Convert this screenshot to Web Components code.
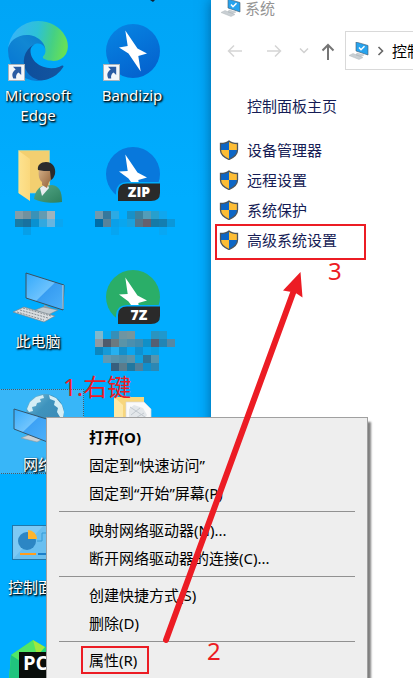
<!DOCTYPE html>
<html lang="zh-CN">
<head>
<meta charset="utf-8">
<title>系统</title>
<style>
  html, body { margin: 0; height: 100%; overflow: hidden; }
  body { font: 15px/20px "Noto Sans", "Noto Sans CJK SC", sans-serif; color: #000; }
</style>
</head>
<body>
<desk-top>
  <desktop-icon icon="edge">Microsoft Edge</desktop-icon>
  <desktop-icon icon="bandizip">Bandizip</desktop-icon>
  <desktop-icon icon="user"></desktop-icon>
  <desktop-icon icon="zip"></desktop-icon>
  <desktop-icon icon="pc">此电脑</desktop-icon>
  <desktop-icon icon="seven"></desktop-icon>
  <desktop-icon icon="network" selected>网络</desktop-icon>
  <desktop-icon icon="folder"></desktop-icon>
  <desktop-icon icon="panel">控制面板</desktop-icon>
  <desktop-icon icon="none"></desktop-icon>
  <desktop-icon icon="pycharm"></desktop-icon>
  <system-window slot="window" heading="系统">
    <side-link slot="home">控制面板主页</side-link>
    <side-link shield>设备管理器</side-link>
    <side-link shield>远程设置</side-link>
    <side-link shield>系统保护</side-link>
    <side-link shield marked>高级系统设置</side-link>
  </system-window>
  <context-menu slot="overlay">
    <menu-item strong>打开(O)</menu-item>
    <menu-item>固定到“快速访问”</menu-item>
    <menu-item>固定到“开始”屏幕(P)</menu-item>
    <menu-rule></menu-rule>
    <menu-item>映射网络驱动器(N)...</menu-item>
    <menu-item>断开网络驱动器的连接(C)...</menu-item>
    <menu-rule></menu-rule>
    <menu-item>创建快捷方式(S)</menu-item>
    <menu-item>删除(D)</menu-item>
    <menu-rule></menu-rule>
    <menu-item marked>属性(R)</menu-item>
  </context-menu>
  <step-notes slot="overlay"></step-notes>
</desk-top>

<script>
const define = (name, html, setup) => {
  const t = document.createElement('template');
  t.innerHTML = html;
  customElements.define(name, class extends HTMLElement {
    constructor() {
      super();
      this.attachShadow({ mode: 'open' }).append(t.content.cloneNode(true));
    }
    connectedCallback() { if (setup) setup(this, this.shadowRoot); }
  });
};

/* 8px blocks that hide a label: x, y, colour triples */
const blocks = list => `<g shape-rendering="crispEdges">${list.map(([x, y, c]) => `<rect x="${x}" y="${y}" width="8" height="8" fill="${c}"/>`).join('')}</g>`;

const shortcut = (x, y) => `<g transform="translate(${x} ${y})">
  <rect x=".5" y=".5" width="16" height="16" fill="#f5f7fa" stroke="#a9b4bd"/>
  <path d="M5 2.8h8.2V11l-2.6-2.6C8.5 9.8 7.7 11.4 8.2 14.4H5.300C3.300 10.500 4.600 7.700 7.700 5.600z" fill="#2b5ca3"/></g>`;

const bolt = 'M31.300 9.500L43.500 27.500 53 32.500 44.300 35 46.700 50.500 34.500 32.500 25 26.500 33.700 25z';

const tag = (text, color) => `<circle cx="39" cy="30" r="27" fill="${color}"/>
  <path d="M31.300 10.500L43.500 28.500 53 33.500 44.300 36 47 52 34.500 34.500 25 27.500 33.700 27z" fill="#fff"/>
  <path d="M22 58V48q1-10 11-10h33v20z" fill="#00adff"/>
  <path d="M24 57V48q0-8.500 9-8.500h33V49q0 8-9 8z" fill="#2a2a2a"/>
  <text x="45" y="53" text-anchor="middle" font-family="Open Sans, Noto Sans, sans-serif" font-weight="800" font-size="14" fill="#fff">${text}</text>`;

const art = {
  none: '',
  edge: `<defs>
    <linearGradient id="a" x1="80" y1="178" x2="241" y2="178" gradientUnits="userSpaceOnUse"><stop stop-color="#0e4f9c"/><stop offset="1" stop-color="#14559f"/></linearGradient>
    <linearGradient id="b" x1="157" y1="104" x2="46" y2="225" gradientUnits="userSpaceOnUse"><stop stop-color="#0d80cf"/><stop offset=".3" stop-color="#1187d3"/><stop offset="1" stop-color="#0878d3"/></linearGradient>
    <linearGradient id="c" x1="10" y1="80" x2="240" y2="130" gradientUnits="userSpaceOnUse"><stop stop-color="#38b4f6"/><stop offset=".45" stop-color="#2dc2d6"/><stop offset=".75" stop-color="#45d084"/><stop offset="1" stop-color="#66e058"/></linearGradient></defs>
    <g transform="translate(8 0) scale(.234)">
    <g transform="translate(-4.630 -4.920)">
    <path d="M235.680 195.460a93.730 93.730 0 0 1-10.540 4.710 101.870 101.870 0 0 1-35.900 6.460c-47.320 0-88.540-32.550-88.540-74.320A31.480 31.480 0 0 1 117.130 105C74.330 106.800 63.330 151.400 63.330 177.530c0 73.880 68.090 81.370 82.760 81.370 7.910 0 19.840-2.300 27-4.560l1.310-.44a128.340 128.340 0 0 0 66.600-52.800 4 4 0 0 0-5.320-5.640z" fill="url(#a)"/>
    <path d="M110.340 246.340A79.200 79.200 0 0 1 87.600 225a80.720 80.720 0 0 1 29.530-120c3.120-1.470 8.450-4.130 15.540-4a32.350 32.350 0 0 1 25.690 13 31.880 31.880 0 0 1 6.360 18.660c0-.21 24.460-79.600-80-79.600-43.900 0-80 41.660-80 78.210a130.150 130.150 0 0 0 12.110 56 128 128 0 0 0 156.380 67.110 75.550 75.550 0 0 1-62.780-8z" fill="url(#b)"/></g>
    <path d="M152.330 148.860c-.81 1.050-3.300 2.500-3.300 5.660 0 2.610 1.700 5.120 4.720 7.230 14.380 10 41.490 8.680 41.560 8.680a59.560 59.560 0 0 0 30.270-8.350A61.380 61.380 0 0 0 256 109.200c.26-22.410-8-37.310-11.340-43.910C223.460 23.840 177.720 0 128 0A128 128 0 0 0 0 126.200c.48-36.540 36.800-66.050 80-66.050 3.500 0 23.460.34 42 10.070 16.340 8.580 24.900 18.940 30.850 29.210 6.180 10.670 7.280 24.150 7.280 29.520s-2.740 13.330-7.800 19.910z" fill="url(#c)"/></g>
    ${shortcut(8, 43)}`,
  bandizip: `<defs><linearGradient id="g" x2=".5" y2="1"><stop stop-color="#0786e4"/><stop offset="1" stop-color="#0464cf"/></linearGradient></defs>
    <path d="M56-21h5l-2 2z" fill="#123"/>
    <circle cx="39" cy="30" r="27" fill="url(#g)"/>
    <path d="${bolt}" fill="#fff"/>
    ${shortcut(9, 43)}`,
  user: `<defs><linearGradient id="f" x2="1"><stop stop-color="#fde28f"/><stop offset="1" stop-color="#fbd87c"/></linearGradient>
    <linearGradient id="k" x2="1" y2="1"><stop stop-color="#d9b78f"/><stop offset="1" stop-color="#8f5d34"/></linearGradient>
    <linearGradient id="j" x2="1" y2="1"><stop stop-color="#56a98a"/><stop offset="1" stop-color="#2d7f5d"/></linearGradient></defs>
    <path d="M18.500 6.500h31V49h-31z" fill="#f3cf70" stroke="#a6d7b4" stroke-width=".7"/>
    <path d="M19 7l11 8v42L19 49.500z" fill="url(#f)"/>
    <path d="M34 55c1-8 5-12 9-13l9-1c7 1 10 6 10 17-10 2-22 0-28-3z" fill="url(#j)"/>
    <path d="M40 44l2 8 7-8-2-5z" fill="#e8edf0"/>
    <path d="M39 24c0-4 12-5 13 1s0 11-3 13l-2 6-5-3v-3c-3-2-4-7-3-14z" fill="url(#k)"/>
    <path d="M38 26c-1-5 3-8 8-8 7 0 10 6 9 12-1 3-2 5-4 6l-1-9c-4 0-8 0-12-1z" fill="#2b2b2d"/>
    ${blocks([[15,67,'#839da8'],[23,67,'#71919e'],[31,67,'#3992b8'],[39,67,'#639bb2'],[47,67,'#a0b3bc'],[15,75,'#197ba5'],[23,75,'#1871a0'],[31,75,'#0991d1'],[39,75,'#32a8df'],[47,75,'#67b5df'],[55,75,'#0aa6f1'],[23,83,'#079fe8']])}`,
  zip: `${tag('ZIP', '#0878dc')}
    ${blocks([[1,67,'#7299ad'],[9,67,'#35789d'],[17,67,'#2caae4'],[33,67,'#1691c9'],[41,67,'#3b829f'],[49,67,'#529db9'],[57,67,'#279fcd'],[65,67,'#10a6ee'],[1,75,'#006da8'],[9,75,'#57839b'],[17,75,'#0aa0e9'],[25,75,'#09a6ef'],[33,75,'#18a2e0'],[41,75,'#51758b'],[49,75,'#65606f'],[57,75,'#167aa7'],[65,75,'#147eb0'],[73,75,'#0b97d9'],[17,83,'#06a5f1'],[65,83,'#08a7f3']])}`,
  pc: `<defs><linearGradient id="m" x2="1" y2="1"><stop stop-color="#32a9fb"/><stop offset=".5" stop-color="#6cc2fd"/><stop offset=".52" stop-color="#379df2"/><stop offset="1" stop-color="#4eb2fa"/></linearGradient></defs>
    <path d="M44 38l7 3v4h-8z" fill="#929da5"/><path d="M35 43l8-3 15 3-10 5z" fill="#c3cbd0" stroke="#78858e" stroke-width=".6"/>
    <path d="M26 6l38 12-1 25-37-12z" fill="url(#m)" stroke="#3a515f"/><path d="M63 18v24" stroke="#c7d1d7"/>
    <path d="M13 45l11-5 31 9-11 6z" fill="#d9dde0" stroke="#79858d" stroke-width=".7"/>
    <path d="M17 45l27 8M20 43l28 8M23 41l28 8" stroke="#858e94" stroke-dasharray="2 1"/>`,
  seven: `${tag('7Z', '#2aae68')}
    ${blocks([[1,64,'#7fb8cc'],[9,64,'#08a9f0'],[17,64,'#358fb8'],[25,64,'#6e95a2'],[33,64,'#76969c'],[57,64,'#2a94c0'],[65,64,'#2098cc'],[1,72,'#8f9aa3'],[9,72,'#4f5b6c'],[17,72,'#6b7a80'],[25,72,'#5a94a8'],[33,72,'#4b8fae'],[41,72,'#3f8cb0'],[49,72,'#1090c8'],[57,72,'#556074'],[65,72,'#2385b4'],[73,72,'#5688a4'],[1,80,'#0d86bf'],[9,80,'#159ad8'],[17,80,'#25b0f0'],[25,80,'#1390cc'],[33,80,'#0aa6f0'],[41,80,'#1090d0'],[49,80,'#08a4ec'],[57,80,'#0a9fe0'],[9,88,'#5f9ab5'],[17,88,'#5793ac'],[25,88,'#4f90ac'],[33,88,'#5f94a8'],[41,88,'#10a0de'],[49,88,'#2e7498'],[57,88,'#5595ae'],[17,96,'#375f7d'],[25,96,'#5a7c8c'],[33,96,'#2078a0'],[41,96,'#51809a'],[49,96,'#0f8fcc'],[57,96,'#2c88b4']])}`,
  network: `<defs><linearGradient id="n" x2="1" y2="1"><stop stop-color="#7cc3dc"/><stop offset=".4" stop-color="#3e93bd"/><stop offset="1" stop-color="#3a86b2"/></linearGradient>
    <linearGradient id="m" x2="1" y2="1"><stop stop-color="#36acfc"/><stop offset=".45" stop-color="#70c4fd"/><stop offset=".47" stop-color="#3da2f5"/><stop offset="1" stop-color="#4eb2fa"/></linearGradient></defs>
    <circle cx="45" cy="23" r="19" fill="url(#n)"/>
    <path d="M27 19l3-7 6-5 7-2 1 3-4 1 1 3-4 1-1 3-4 1 1 4-4 1zM49 5l7 3 6 7 2 7-1 6-3-1-3-5 1-4-4-3 1-4-5-2zM30 25l5 1 2 4-4 1z" fill="#d5eef5"/>
    <path d="M29 41h8v6h-8z" fill="#98a4ac"/><path d="M21 48l10-4 16 3-10 5z" fill="#c9d1d6" stroke="#8b98a0" stroke-width=".6"/>
    <path d="M14 19l36 11v23L14 39z" fill="url(#m)" stroke="#34566d"/>`,
  folder: `<path d="M20 7h30v57H20z" fill="#f7d67c"/><path d="M20 7l9 8v49h-9z" fill="#fde8a5"/>
    <path d="M32 12h18l7 7v45H32z" fill="#fafafa" stroke="#d9d9d9" stroke-width=".7"/>
    <path d="M35 19l5-4 9 3 4 7-3 5-9 1-6-4z" fill="#e3e7ea"/><path d="M36 17l15 10M37 25l9-7M40 29l10-6" stroke="#c2c9cf"/>`,
  panel: `<rect x="12.500" y="12.500" width="48" height="34" fill="#69bff0" stroke="#1f77ab"/>
    <path d="M13 46V13h30z" fill="#8bd0f6" opacity=".6"/>
    <circle cx="27" cy="28" r="9" fill="#2c86c4"/><path d="M28 26V17a9 9 0 0 1 9 9z" fill="#ffb52e"/><path d="M37 28h5v-8h4" fill="none" stroke="#359bd6"/>
    <path d="M20 41h16" stroke="#ff9d1c" stroke-width="2"/><path d="M38 41h14" stroke="#1b7fc9" stroke-width="2"/>`,
  pycharm: `<path d="M11 19l22-15 12 7 15-3v50H8z" fill="#24d67c"/><path d="M11 19l22-15 8 12-22 10-8 32H8z" fill="#52e566"/><path d="M33 4l12 7-8 9z" fill="#9fe83e"/><path d="M8 58l3-39 9 6v33z" fill="#20c47e"/>
    <rect x="19" y="16" width="42" height="48" fill="#080d0a"/>
    <text x="23" y="34" font-family="Open Sans, Noto Sans, sans-serif" font-weight="700" font-size="20" fill="#fff">PC</text>
    <rect x="24" y="45.500" width="14" height="2" fill="#fff"/>`
};

const systemIcon = `<svg width="20" height="18" viewBox="0 0 20 18" aria-hidden="true">
  <path d="M7 0l12 3.500V13L7 9z" fill="#27a3ee" stroke="#45596a" stroke-width=".6"/><path d="M10 5.500l2 2.200 3.500-3.500" fill="none" stroke="#fff" stroke-width="1.500"/>
  <path d="M8 11l7 2-3 1.500-5-1.500zM0 13.500l4-2 10 4-4 2z" fill="#c9cfd3" stroke="#a8b0b5" stroke-width=".4"/></svg>`;

define('desktop-icon', `<style>
  :host { display: block; position: relative; height: 84px; }
  button { display: block; position: relative; width: 100%; padding: 0; border: 0; background: none; font: inherit; color: #fff; text-align: center;
    text-shadow: 1px 1px 2px #000, 1px 1px 2px #000; }
  svg { display: block; width: 76px; height: 64px; overflow: visible; text-shadow: none; }
  :host([selected])::before { content: ""; position: absolute; inset: -1px -8px 0; box-sizing: border-box; background: #38b6f8; border: 1px dotted #4a5a63; }
</style><button><svg viewBox="0 0 76 64" aria-hidden="true"></svg><slot></slot></button>`,
(el, root) => { root.querySelector('svg').innerHTML = art[el.getAttribute('icon')]; });

define('desk-top', `<style>
  :host { display: grid; grid-template-columns: 211px 1fr; position: relative; height: 100vh; overflow: hidden; background: linear-gradient(#00a5f6, #00adff 200px, #00adff); }
  .icons { display: grid; grid-template-columns: 76px 76px; grid-auto-rows: 84px; gap: 39px 18px; padding-top: 21px; min-height: 0; align-content: start; }
</style><div class="icons"><slot></slot></div><slot name="window"></slot><slot name="overlay"></slot>`);

define('system-window', `<style>
  :host { display: block; min-width: 0; overflow: visible; background: #fff; box-shadow: 0 0 12px rgba(0,30,70,.5); }
  header { display: flex; align-items: center; gap: 4px; height: 16px; padding-left: 10px; color: #949494; line-height: 16px; }
  .nav { display: flex; height: 39px; margin-top: 15px; }
  .nav > button { flex: none; width: 39px; padding: 0; border: 0; background: none; }
  .nav > button.narrow { width: 22px; }
  .nav > button.up { width: 26px; margin-right: 4px; }
  .nav > button:first-child { margin-left: 4px; }
  .nav svg { display: block; margin: auto; flex: none; }
  .address { display: flex; flex: 1; align-items: center; gap: 8px; min-width: 0; padding-left: 3px; border: 1px solid #d9d9d9; border-right: 0; white-space: nowrap; }
  .address svg { margin: 0; }
  .address button { padding: 0; border: 0; background: none; font: inherit; }
  .home { margin-top: 21px; }
  .links { margin-top: 14px; }
</style>
<header>${systemIcon}<span id="t"></span></header>
<div class="nav">
  <button aria-label="后退"><svg width="16" height="14"><path d="M15 7H1M7 1.500L1.500 7 7 12.500" fill="none" stroke="#d5d5d5" stroke-width="1.500"/></svg></button>
  <button aria-label="前进"><svg width="16" height="14"><path d="M1 7h14M9 1.500L14.500 7 9 12.500" fill="none" stroke="#d5d5d5" stroke-width="1.500"/></svg></button>
  <button class="narrow" aria-label="最近"><svg width="10" height="8"><path d="M1 1.500l4 4 4-4" fill="none" stroke="#d0d0d0" stroke-width="1.500"/></svg></button>
  <button class="up" aria-label="上移"><svg width="14" height="18"><path d="M7 18V3M1.500 8.500L7 3l5.500 5.500" fill="none" stroke="#757575" stroke-width="2"/></svg></button>
  <div class="address">${systemIcon}<svg width="7" height="10"><path d="M1.500 1l4 4-4 4" fill="none" stroke="#666" stroke-width="1.600"/></svg><button>控制</button></div>
</div>
<div class="home"><slot name="home"></slot></div>
<nav class="links"><slot></slot></nav>`,
(el, root) => { root.getElementById('t').textContent = el.getAttribute('heading'); });

define('side-link', `<style>
  :host { display: block; position: relative; }
  a { display: flex; align-items: center; gap: 8px; height: 30px; padding-left: 8px; color: #151c55; text-decoration: none; white-space: nowrap; }
  svg { width: 20px; height: 20px; visibility: hidden; }
  :host([shield]) svg { visibility: visible; }
  :host([marked])::after { content: ""; position: absolute; top: -1px; left: 4px; width: 151px; bottom: -5px; box-sizing: border-box; border: 2px solid #ec1c24; }
</style><a href="#"><svg viewBox="0 0 20 20" aria-hidden="true"><defs><clipPath id="c"><path d="M10 1c2 1.800 5 2.500 8.500 2.500V10c0 4.500-4 7.500-8.500 9.500C5.500 17.500 1.500 14.500 1.500 10V3.500C5 3.500 8 2.800 10 1z"/></clipPath></defs>
<g clip-path="url(#c)"><path d="M0 0h10v10H0zM10 10h10v10H10z" fill="#0d66c5"/><path d="M10 0h10v10H10zM0 10h10v10H0z" fill="#fdbd35"/></g>
<path d="M10 1c2 1.800 5 2.500 8.500 2.500V10c0 4.500-4 7.500-8.500 9.500C5.500 17.500 1.500 14.500 1.500 10V3.500C5 3.500 8 2.800 10 1z" fill="none" stroke="#4e565c" stroke-width="1.300"/></svg><span><slot></slot></span></a>`);

define('context-menu', `<style>
  :host { display: block; position: absolute; left: 46px; top: 417px; box-sizing: border-box; min-width: 322px; padding: 5px 0; background: #eee; border: 1px solid #a0a0a0; box-shadow: 3px 5px 2px rgba(0,0,0,.5); }
</style><div role="menu"><slot></slot></div>`);

define('menu-item', `<style>
  :host { display: block; }
  button { display: flex; align-items: center; width: 100%; height: 28px; padding: 0 42px 0 34px; border: 0; background: none; font: inherit; color: #000; white-space: nowrap; }
  span { box-sizing: border-box; height: 28px; padding: 0 10px 0 6px; border: 2px solid transparent; line-height: 24px; }
  :host([strong]) { font-weight: 700; }
  :host([marked]) span { border-color: #ec1c24; }
</style><button role="menuitem"><span><slot></slot></span></button>`);

define('menu-rule', `<style>
  :host { display: block; height: 9px; padding: 0 12px; }
  hr { margin: 0; border: 0; border-bottom: 1px solid #919191; height: 4px; }
</style><hr>`);

define('step-notes', `<style>
  :host { position: absolute; inset: 0; pointer-events: none; color: #ec1c24; font-size: 24px; line-height: 24px; }
  svg { position: absolute; left: 0; top: 0; }
  span { position: absolute; }
  .one { left: 63px; top: 375px; }
  .two { left: 207px; top: 639px; }
  .three { left: 328px; top: 259px; }
</style>
<svg width="413" height="678" viewBox="0 0 413 678" aria-hidden="true"><path d="M166 640L293 293" stroke="#ec1c24" stroke-width="6" stroke-linecap="round"/><path d="M300.500 272l-17.500 18.500 8.500 1.500 5 1.500 6 4z" fill="#ec1c24"/></svg>
<span class="one">1.右键</span><span class="two">2</span><span class="three">3</span>`);
</script>
</body>
</html>
